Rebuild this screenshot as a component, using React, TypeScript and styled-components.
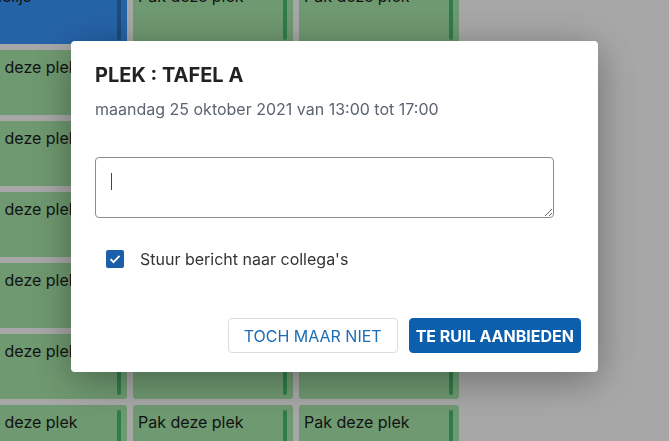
import React from 'react';
import styled, { createGlobalStyle } from 'styled-components';

const GlobalStyle = createGlobalStyle`
    html, body {
        margin: 0;
        padding: 0;
        height: 100%;
        overflow: hidden;
        background: #f0f0f0;
        font-family: Inter, 'Noto Sans', sans-serif;
    }
`;

type Slot = { label: string; taken?: boolean };

const rows: Slot[][] = [
    [{ label: 'Annelijs', taken: true }, { label: 'Pak deze plek' }, { label: 'Pak deze plek' }],
    ...Array.from({ length: 6 }, () => [
        { label: 'Pak deze plek' },
        { label: 'Pak deze plek' },
        { label: 'Pak deze plek' },
    ]),
];

const App = () => {
    return (
        <>
            <GlobalStyle />
            <Page>
                <Schedule>
                    {rows.flat().map((slot, i) => (
                        <Tile key={i} $taken={slot.taken}>
                            <TileText>{slot.label}</TileText>
                            <Stripe $taken={slot.taken} />
                        </Tile>
                    ))}
                </Schedule>
            </Page>
            <Overlay>
                <Dialog>
                    <Title>PLEK : TAFEL A</Title>
                    <When>maandag 25 oktober 2021 van 13:00 tot 17:00</When>
                    <Field>
                        <Message autoFocus />
                        <Caret />
                    </Field>
                    <CheckRow>
                        <Box>
                            <svg width="12" height="10" viewBox="0 0 12 10">
                                <path d="M1.5 5.2 L4.5 8.2 L10.5 1.8" fill="none" stroke="#fff" strokeWidth="1.8" />
                            </svg>
                        </Box>
                        <CheckLabel>Stuur bericht naar collega's</CheckLabel>
                    </CheckRow>
                    <Actions>
                        <Button>TOCH MAAR NIET</Button>
                        <Button $primary>TE RUIL AANBIEDEN</Button>
                    </Actions>
                </Dialog>
            </Overlay>
        </>
    );
};

const Page = styled.div`
    height: 100vh;
    overflow: hidden;
`;

const Schedule = styled.div`
    display: grid;
    grid-template-columns: repeat(3, 160px);
    grid-auto-rows: 65px;
    gap: 6px;
    margin: -21px 0 0 -33px;
`;

const Tile = styled.div<{ $taken?: boolean }>`
    display: flex;
    padding: 5px 6px 4px 5px;
    border-radius: 3px;
    background: ${(p) => (p.$taken ? '#358ef0' : '#9fdba1')};
`;

const TileText = styled.div`
    flex: 1;
    font-size: 16px;
    line-height: 24px;
    color: #1a1a1a;
`;

const Stripe = styled.div<{ $taken?: boolean }>`
    width: 4px;
    border-radius: 2px;
    background: ${(p) => (p.$taken ? '#2c6ab0' : '#42b36a')};
`;

const Overlay = styled.div`
    position: fixed;
    inset: 0;
    background: rgba(0, 0, 0, 0.3);
    display: flex;
    justify-content: center;
    align-items: flex-start;
    padding-top: 41px;
`;

const Dialog = styled.div`
    width: 527px;
    height: 331px;
    box-sizing: border-box;
    background: #fff;
    border-radius: 4px;
    padding: 22px 17px 19px 24px;
    display: flex;
    flex-direction: column;
    box-shadow: 0 8px 40px rgba(0, 0, 0, 0.35);
`;

const Title = styled.div`
    font-size: 20px;
    line-height: 24px;
    font-weight: 700;
    color: #222;
`;

const When = styled.div`
    margin-top: 11px;
    font-size: 16px;
    line-height: 22px;
    color: #5b6470;
`;

const Field = styled.div`
    position: relative;
    margin-top: 37px;
    width: 459px;
    height: 61px;
`;

const Message = styled.textarea`
    display: block;
    width: 100%;
    height: 100%;
    box-sizing: border-box;
    padding: 13px 15px;
    border: 1px solid #8d8d8d;
    border-radius: 4px;
    font-family: Inter, sans-serif;
    font-size: 16px;
    line-height: 22px;
    caret-color: transparent;
    outline: none;
    resize: vertical;
`;

const Caret = styled.span`
    position: absolute;
    left: 16px;
    top: 16px;
    width: 1px;
    height: 17px;
    background: #1a4f8a;
`;

const CheckRow = styled.label`
    display: flex;
    align-items: center;
    gap: 16px;
    margin-top: 29px;
    padding-left: 11px;
    height: 24px;
`;

const Box = styled.span`
    width: 18px;
    height: 18px;
    border-radius: 2px;
    background: #1a5fa8;
    display: flex;
    align-items: center;
    justify-content: center;
`;

const CheckLabel = styled.span`
    font-size: 16px;
    color: #333;
`;

const Actions = styled.div`
    margin-top: auto;
    display: flex;
    justify-content: flex-end;
    gap: 11px;
`;

const Button = styled.button<{ $primary?: boolean }>`
    height: 35px;
    padding: 0 ${(p) => (p.$primary ? '6px' : '15px')};
    border-radius: 4px;
    font-family: Inter, sans-serif;
    font-size: 16px;
    font-weight: ${(p) => (p.$primary ? 700 : 400)};
    border: 1px solid ${(p) => (p.$primary ? '#0b5fad' : '#dcdcdc')};
    background: ${(p) => (p.$primary ? '#0b5fad' : '#fff')};
    color: ${(p) => (p.$primary ? '#fff' : '#1d6db5')};
`;

export default App;
